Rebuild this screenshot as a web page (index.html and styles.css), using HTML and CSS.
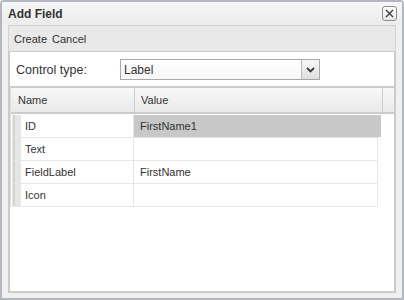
FILE: index.html
```html
<!DOCTYPE html>
<html lang="en">
<head>
    <meta charset="UTF-8">
    <meta name="viewport" content="width=device-width, initial-scale=1.0">
    <title>Add Field</title>
    <link rel="stylesheet" href="styles.css">
</head>
<body>
    <div class="window">
        <div class="titlebar">
            <span class="title">Add Field</span>
            <span class="close">
                <svg width="9" height="9" viewBox="0 0 9 9">
                    <path d="M1 1 L8 8 M8 1 L1 8" stroke="#3c3c3c" stroke-width="1.4" fill="none"/>
                </svg>
            </span>
        </div>

        <div class="panel">
            <div class="toolbar">
                <span class="tool">Create</span>
                <span class="tool">Cancel</span>
            </div>

            <div class="content">
                <div class="form-row">
                    <span class="form-label">Control type:</span>
                    <div class="select">
                        <span class="select-text">Label</span>
                        <span class="select-btn">
                            <svg width="9" height="6" viewBox="0 0 9 6">
                                <path d="M1 1 L4.5 4.5 L8 1" stroke="#3a3a3a" stroke-width="1.8" fill="none"/>
                            </svg>
                        </span>
                    </div>
                </div>

                <div class="grid">
                    <div class="grid-head">
                        <div class="hcell hname">Name</div>
                        <div class="hcell hvalue">Value</div>
                        <div class="hcell hspacer"></div>
                    </div>
                    <div class="grid-body">
                        <div class="row">
                            <div class="handle"></div>
                            <div class="cell name">ID</div>
                            <div class="cell value selected">FirstName1</div>
                        </div>
                        <div class="row">
                            <div class="handle"></div>
                            <div class="cell name">Text</div>
                            <div class="cell value"></div>
                        </div>
                        <div class="row">
                            <div class="handle"></div>
                            <div class="cell name">FieldLabel</div>
                            <div class="cell value">FirstName</div>
                        </div>
                        <div class="row">
                            <div class="handle"></div>
                            <div class="cell name">Icon</div>
                            <div class="cell value"></div>
                        </div>
                    </div>
                </div>
            </div>
        </div>
    </div>
</body>
</html>
```

FILE: styles.css
```css
* {
    margin: 0;
    padding: 0;
    box-sizing: border-box;
}

body {
    font-family: 'Liberation Sans', Arial, sans-serif;
    color: #333;
    background: #fff;
}

.window {
    width: 404px;
    height: 300px;
    border: 2px solid #b3b7bf;
    border-radius: 4px 4px 0 0;
    background: #f0f0f0;
    display: flex;
    flex-direction: column;
}

.titlebar {
    height: 23px;
    display: flex;
    align-items: center;
    justify-content: space-between;
    padding: 0 5px 0 6px;
    background: linear-gradient(#f6f6f6, #ececec);
}

.title {
    font-weight: bold;
    font-size: 12px;
    color: #333;
}

.close {
    width: 15px;
    height: 15px;
    border: 1px solid #8c8c8c;
    border-radius: 3px;
    background: linear-gradient(#ffffff, #e6e6e6);
    display: flex;
    align-items: center;
    justify-content: center;
}

.panel {
    flex: 1;
    display: flex;
    flex-direction: column;
    margin: 0 6px 5px 6px;
}

.toolbar {
    height: 26px;
    border: 1px solid #d2d2d2;
    border-bottom: none;
    background: #e9e9e9;
    display: flex;
    align-items: center;
    gap: 5px;
    padding-left: 5px;
    font-size: 11px;
}

.content {
    flex: 1;
    background: #fff;
    border: 2px solid #cbcbcb;
    border-top: 1px solid #cbcbcb;
    padding-top: 7px;
}

.form-row {
    display: flex;
    align-items: center;
    padding-left: 6px;
}

.form-label {
    width: 104px;
    font-size: 12.5px;
}

.select {
    width: 200px;
    height: 21px;
    border: 1px solid #a8a8a8;
    background: linear-gradient(#ffffff, #f7f7f7);
    display: flex;
    align-items: center;
}

.select-text {
    flex: 1;
    padding-left: 3px;
    font-size: 12px;
}

.select-btn {
    width: 18px;
    height: 100%;
    border-left: 1px solid #bcbcbc;
    background: linear-gradient(#f7f7f7, #dedede);
    display: flex;
    align-items: center;
    justify-content: center;
}

.grid {
    margin-top: 6px;
    border-top: 2px solid #cbcbcb;
    border-left: 1px solid #dedede;
}

.grid-head {
    display: flex;
    height: 26px;
    border-bottom: 2px solid #cbcbcb;
    background: linear-gradient(#f8f8f8, #e9e9e9);
    font-size: 11px;
}

.hcell {
    display: flex;
    align-items: center;
    border-right: 1px solid #cfcfcf;
}

.hname {
    width: 124px;
    padding-left: 7px;
}

.hvalue {
    width: 248px;
    padding-left: 6px;
}

.hspacer {
    flex: 1;
    border-right: none;
}

.grid-body {
    padding: 1px 0 0 1px;
}

.row {
    display: flex;
    width: 366px;
    height: 23px;
    border: 1px solid #e6e6e6;
    border-top: none;
    font-size: 11px;
}

.handle {
    width: 8px;
    background: #e6e6e6;
    border-left: 2px solid #d4d4d4;
}

.cell {
    display: flex;
    align-items: center;
}

.name {
    width: 113px;
    padding-left: 4px;
    border-right: 1px solid #e6e6e6;
}

.value {
    flex: 1;
    padding-left: 6px;
}

.selected {
    background: #c8c8c8;
    margin-right: -4px;
}
```
